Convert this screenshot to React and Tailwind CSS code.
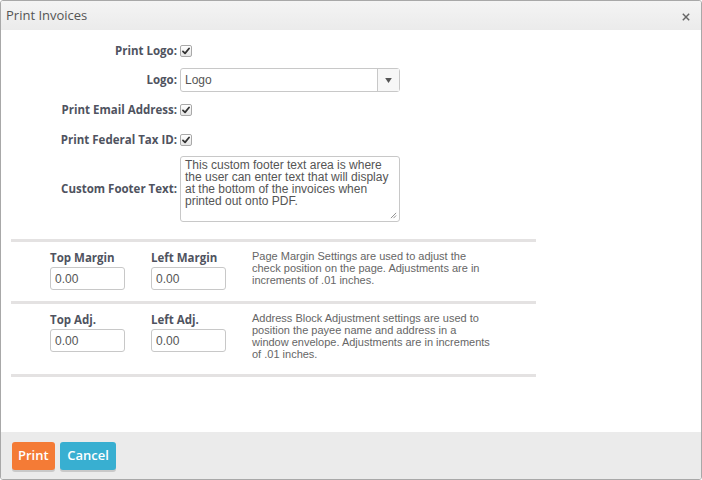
import React from 'react';

const font = { fontFamily: '"Open Sans", "Liberation Sans", Arial, sans-serif' };
const body = { fontFamily: '"Liberation Sans", Arial, sans-serif' };

const Check = () => (
  <span className="inline-flex h-[12px] w-[12px] items-center justify-center rounded-[2px] border border-[#a9a9a9] bg-gradient-to-b from-white to-[#e6e6e6]">
    <svg viewBox="0 0 10 10" className="h-[8px] w-[8px]">
      <path d="M1.2 5.4 L3.8 8 L8.8 1.8" fill="none" stroke="#333" strokeWidth="2.2" strokeLinecap="round" strokeLinejoin="round" />
    </svg>
  </span>
);

const Label = ({ children }) => (
  <div className="w-[169px] shrink-0 pr-[3px] text-right text-[11.5px] font-bold text-[#4f5360]">{children}</div>
);

const SmallInput = ({ label, className = '' }) => (
  <div className={`flex w-[75px] flex-col ${className}`}>
    <div className="mb-[3px] text-[11.5px] font-bold leading-[13px] text-[#4f5360]">{label}</div>
    <div className="flex h-[23px] items-center rounded-[3px] border border-[#c8c8c8] px-[4px] text-[12px] text-[#555]" style={body}>0.00</div>
  </div>
);

const Divider = () => <div className="h-[3px] w-[525px] bg-[#e4e2e2]" />;

export default function App() {
  return (
    <div className="h-[480px] w-[702px] bg-white" style={font}>
      <div className="flex h-[480px] w-[702px] flex-col overflow-hidden rounded-[3px] border border-[#a8a8a8]">
        <div className="flex h-[29px] shrink-0 items-center justify-between bg-gradient-to-b from-[#f4f4f4] to-[#ebebeb] pl-[5px] pr-[11px]">
          <span className="text-[13px] text-[#555]">Print Invoices</span>
          <svg viewBox="0 0 10 10" className="mt-[2px] h-[8px] w-[8px]">
            <path d="M1 1 L9 9 M9 1 L1 9" stroke="#666" strokeWidth="1.8" />
          </svg>
        </div>

        <div className="flex-1 bg-white pl-[10px] pt-[14px]">
          <div className="flex h-[14px] items-center">
            <Label>Print Logo:</Label>
            <Check />
          </div>
          <div className="mt-[10px] flex items-center">
            <Label>Logo:</Label>
            <div className="flex h-[24px] w-[220px] items-center rounded-[3px] border border-[#c8c8c8] bg-white">
              <span className="flex-1 px-[4px] text-[12px] text-[#555]" style={body}>Logo</span>
              <span className="flex h-full w-[22px] items-center justify-center border-l border-[#c8c8c8] bg-[#f7f7f7]">
                <svg viewBox="0 0 8 6" className="h-[5px] w-[7px]">
                  <path d="M0 0 H8 L4 6 Z" fill="#555" />
                </svg>
              </span>
            </div>
          </div>
          <div className="mt-[11px] flex h-[14px] items-center">
            <Label>Print Email Address:</Label>
            <Check />
          </div>
          <div className="mt-[16px] flex h-[14px] items-center">
            <Label>Print Federal Tax ID:</Label>
            <Check />
          </div>
          <div className="mt-[9px] flex items-center">
            <Label>Custom Footer Text:</Label>
            <div className="relative h-[66px] w-[220px] rounded-[3px] border border-[#c8c8c8] px-[4px] pt-[2px] text-[12px] leading-[12px] text-[#555]" style={body}>
              This custom footer text area is where the user can enter text that will display at the bottom of the invoices when printed out onto PDF.
              <svg viewBox="0 0 8 8" className="absolute bottom-[2px] right-[2px] h-[7px] w-[7px]">
                <path d="M7 1 L1 7 M7 4 L4 7" stroke="#777" strokeWidth="0.9" />
              </svg>
            </div>
          </div>

          <div className="mt-[17px]">
            <Divider />
          </div>
          <div className="flex h-[59px] items-start pt-[9px]">
            <SmallInput label="Top Margin" className="ml-[39px]" />
            <SmallInput label="Left Margin" className="ml-[26px]" />
            <p className="ml-[26px] mt-[-1px] w-[242px] text-[11px] leading-[12px] text-[#666]" style={body}>
              Page Margin Settings are used to adjust the check position on the page. Adjustments are in increments of .01 inches.
            </p>
          </div>
          <Divider />
          <div className="flex h-[70px] items-start pt-[9px]">
            <SmallInput label="Top Adj." className="ml-[39px]" />
            <SmallInput label="Left Adj." className="ml-[26px]" />
            <p className="ml-[26px] mt-[-1px] w-[242px] text-[11px] leading-[12px] text-[#666]" style={body}>
              Address Block Adjustment settings are used to position the payee name and address in a window envelope. Adjustments are in increments of .01 inches.
            </p>
          </div>
          <Divider />
        </div>

        <div className="flex h-[47px] shrink-0 items-center gap-[5px] bg-[#ebebeb] pl-[11px]">
          <button className="h-[28px] rounded-[3px] bg-[#f47b36] px-[6px] text-[13px] font-semibold text-white shadow-[0_2px_0_#c9c9c9]">Print</button>
          <button className="h-[28px] rounded-[3px] bg-[#38afd1] px-[7.5px] text-[13px] font-semibold text-white shadow-[0_2px_0_#c9c9c9]">Cancel</button>
        </div>
      </div>
    </div>
  );
}
